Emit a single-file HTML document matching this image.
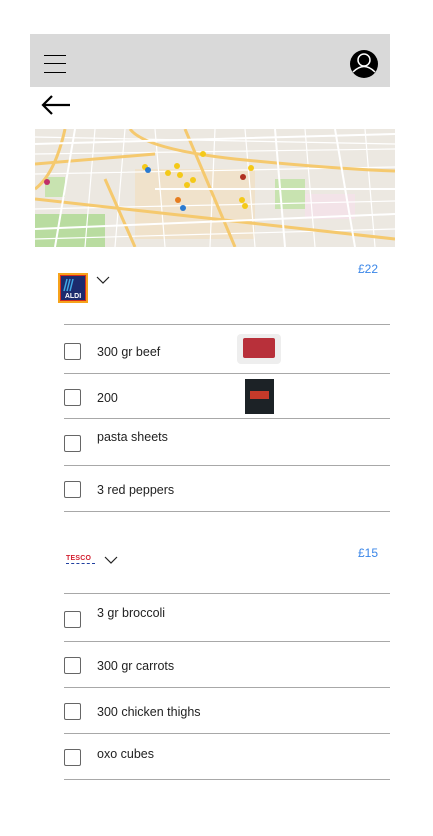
<!DOCTYPE html>
<html><head><meta charset="utf-8"><style>
body{margin:0;width:433px;height:836px;background:#fff;position:relative;font-family:"Liberation Sans",sans-serif;overflow:hidden}
.a{position:absolute}
.ln{position:absolute;left:64px;width:326px;height:1px;background:#a8a8a8}
.cb{position:absolute;left:64px;width:15px;height:15px;border:1px solid #666;border-radius:2px}
.t{position:absolute;left:97px;font-size:12.5px;color:#222}
.pr{position:absolute;left:358px;font-size:12px;color:#3a86e8}
</style></head><body>
<div class="a" style="left:30px;top:34px;width:360px;height:53px;background:#d9d9d9"></div>
<div class="a" style="left:44px;top:55px;width:22px;height:1px;background:#000"></div>
<div class="a" style="left:44px;top:63px;width:22px;height:1px;background:#000"></div>
<div class="a" style="left:44px;top:72px;width:22px;height:1px;background:#000"></div>
<svg class="a" style="left:349px;top:49px" width="30" height="30" viewBox="0 0 30 30"><circle cx="15" cy="15" r="14" fill="#000"/><circle cx="15" cy="11" r="6" fill="none" stroke="#fff" stroke-width="1.5"/><path d="M4 23 Q15 12 26 23" fill="none" stroke="#fff" stroke-width="1.5"/></svg>
<svg class="a" style="left:40px;top:94px" width="32" height="22" viewBox="0 0 32 22"><path d="M30 11H4M12 2L3 11L12 20" fill="none" stroke="#000" stroke-width="2.2"/></svg>
<svg class="a" style="left:35px;top:129px" width="360" height="118" viewBox="0 0 360 118">
<rect width="360" height="118" fill="#ece8e1"/>
<rect x="100" y="40" width="120" height="70" fill="#f2dfc2" opacity=".7"/>
<rect x="0" y="85" width="70" height="33" fill="#b9dca0"/>
<rect x="10" y="48" width="20" height="20" fill="#c8e3b0"/>
<rect x="240" y="50" width="30" height="30" fill="#c8e3b0"/>
<rect x="270" y="65" width="50" height="25" fill="#f3e3e8"/>
<g stroke="#fff" stroke-width="1.2" fill="none">
<path d="M0 25L360 20M0 45L360 38M0 80L360 72M60 0L50 118M90 0L80 118M120 0L130 118M180 0L175 118M210 0L220 118M270 0L280 118M330 0L340 118M0 110L360 100M0 8L360 15"/>
</g>
<path d="M0 60 Q20 45 30 0M95 0 Q110 20 200 30 Q300 40 360 42M150 0 L200 118M0 70 L360 110M70 50 L100 118M0 35 L120 25" stroke="#f5c96e" stroke-width="3" fill="none"/>
<path d="M0 15 L360 5M40 0 L20 118M240 0 L250 118M300 0 L320 118M0 100 L360 85M120 60 L360 60" stroke="#fff" stroke-width="2" fill="none"/>
<g fill="#f4c918"><circle cx="133" cy="44" r="3"/><circle cx="168" cy="25" r="3"/><circle cx="142" cy="37" r="3"/><circle cx="145" cy="46" r="3"/><circle cx="158" cy="51" r="3"/><circle cx="152" cy="56" r="3"/><circle cx="216" cy="39" r="3"/><circle cx="207" cy="71" r="3"/><circle cx="210" cy="77" r="3"/><circle cx="110" cy="38" r="3"/></g>
<circle cx="113" cy="41" r="3" fill="#2a7ad1"/><circle cx="143" cy="71" r="3" fill="#e67d20"/><circle cx="148" cy="79" r="3" fill="#2a7ad1"/><circle cx="208" cy="48" r="3" fill="#b03020"/><circle cx="12" cy="53" r="3" fill="#c0306a"/>
</svg>
<svg class="a" style="left:58px;top:273px" width="30" height="30" viewBox="0 0 30 30"><rect width="30" height="30" fill="#f6a31b"/><rect x="2" y="2" width="26" height="26" fill="#d42b1e"/><rect x="3" y="3" width="24" height="24" fill="#1c2b6e"/><path d="M9 6L6 18M12 6L9 18M15 6L12 18" stroke="#3fa8e6" stroke-width="1.5"/><text x="15" y="25" font-size="7" font-weight="bold" fill="#fff" text-anchor="middle" font-family="Liberation Sans">ALDI</text></svg>
<svg class="a" style="left:96px;top:276px" width="14" height="8"><path d="M1 1L7 7L13 1" fill="none" stroke="#222" stroke-width="1.2"/></svg>
<div class="pr" style="top:262px">£22</div>
<div class="ln" style="top:324px"></div>
<div class="cb" style="top:343px"></div><div class="t" style="top:345px">300 gr beef</div>
<div class="a" style="left:237px;top:334px;width:44px;height:30px;background:#eee;border-radius:4px"><div style="margin:4px 6px;height:20px;background:#b8303a;border-radius:2px"></div></div>
<div class="ln" style="top:373px"></div>
<div class="cb" style="top:389px"></div><div class="t" style="top:391px">200</div>
<div class="a" style="left:245px;top:379px;width:29px;height:35px;background:#1c2226"><div style="margin:12px 5px 0;height:8px;background:#c53a2a"></div></div>
<div class="ln" style="top:418px"></div>
<div class="cb" style="top:435px"></div><div class="t" style="top:430px">pasta sheets</div>
<div class="ln" style="top:465px"></div>
<div class="cb" style="top:481px"></div><div class="t" style="top:483px">3 red peppers</div>
<div class="ln" style="top:511px"></div>
<div class="a" style="left:66px;top:555px;font-size:7px;font-weight:bold;color:#d32030;letter-spacing:.2px">TESCO</div>
<div class="a" style="left:66px;top:563px;width:29px;height:1px;border-top:1px dashed #2040a0"></div>
<svg class="a" style="left:104px;top:556px" width="14" height="8"><path d="M1 1L7 7L13 1" fill="none" stroke="#222" stroke-width="1.2"/></svg>
<div class="pr" style="top:546px">£15</div>
<div class="ln" style="top:593px"></div>
<div class="cb" style="top:611px"></div><div class="t" style="top:606px">3 gr broccoli</div>
<div class="ln" style="top:641px"></div>
<div class="cb" style="top:657px"></div><div class="t" style="top:659px">300 gr carrots</div>
<div class="ln" style="top:687px"></div>
<div class="cb" style="top:703px"></div><div class="t" style="top:705px">300 chicken thighs</div>
<div class="ln" style="top:733px"></div>
<div class="cb" style="top:749px"></div><div class="t" style="top:747px">oxo cubes</div>
<div class="ln" style="top:779px"></div>
</body></html>
